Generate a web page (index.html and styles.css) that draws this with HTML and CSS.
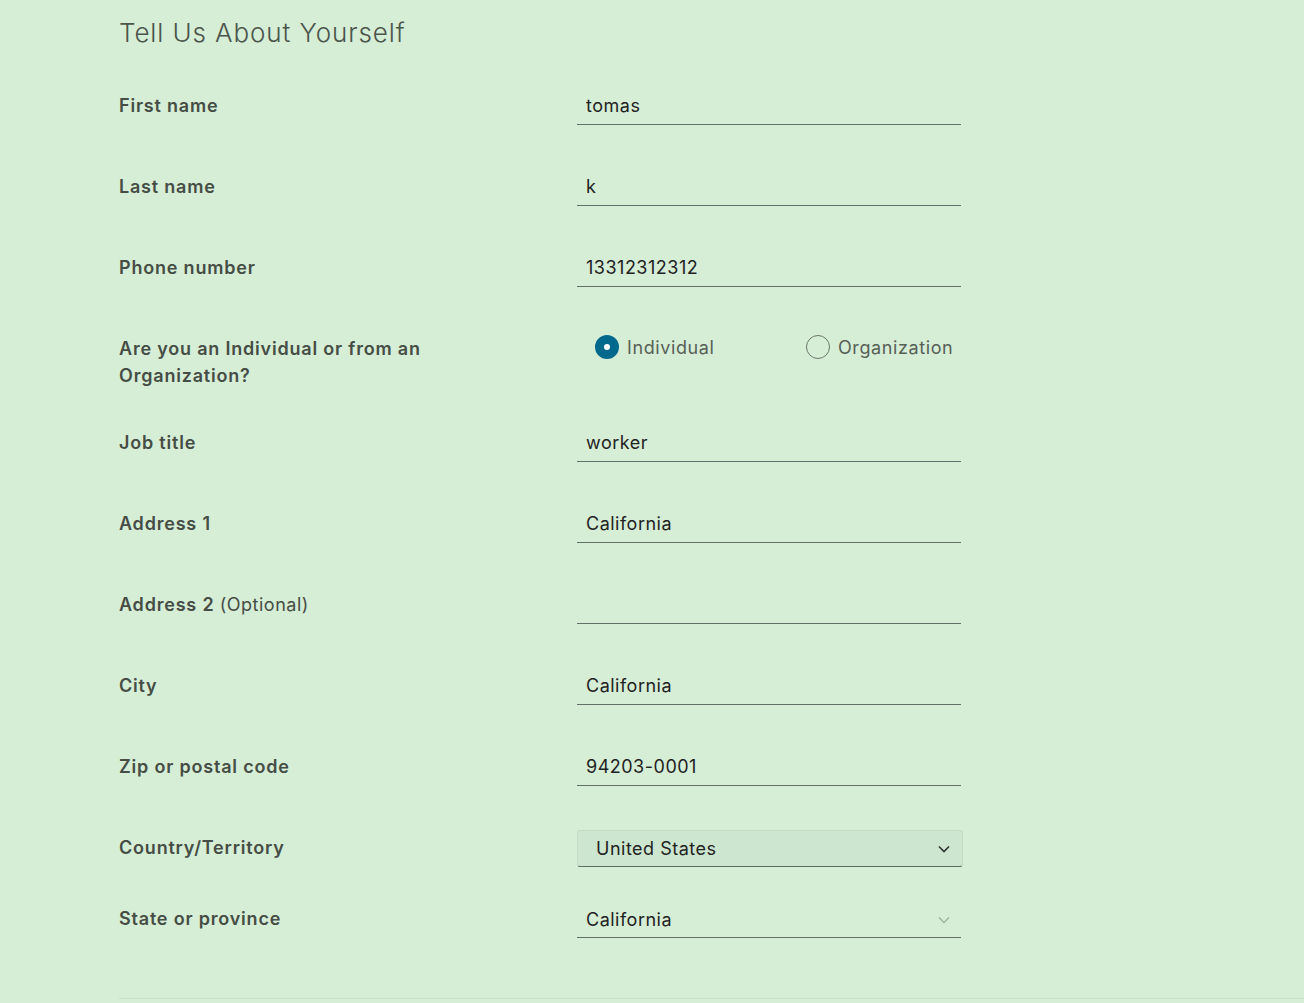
FILE: index.html
```html
<!DOCTYPE html>
<html>
<head>
<meta charset="utf-8">
<link rel="stylesheet" href="styles.css">
</head>
<body>
<div class="page">
  <h1 class="title">Tell Us About Yourself</h1>
  <form class="form">
    <div class="row">
      <label class="label">First name</label>
      <div class="field"><input class="input" value="tomas"></div>
    </div>
    <div class="row">
      <label class="label">Last name</label>
      <div class="field"><input class="input" value="k"></div>
    </div>
    <div class="row">
      <label class="label">Phone number</label>
      <div class="field"><input class="input" value="13312312312"></div>
    </div>
    <div class="row row-radio">
      <label class="label">Are you an Individual or from an Organization?</label>
      <div class="radios">
        <span class="radio radio-first"><span class="dot checked"></span><span class="radio-text">Individual</span></span>
        <span class="radio"><span class="dot"></span><span class="radio-text">Organization</span></span>
      </div>
    </div>
    <div class="row">
      <label class="label">Job title</label>
      <div class="field"><input class="input" value="worker"></div>
    </div>
    <div class="row">
      <label class="label">Address 1</label>
      <div class="field"><input class="input" value="California"></div>
    </div>
    <div class="row">
      <label class="label">Address 2 <span class="opt">(Optional)</span></label>
      <div class="field"><input class="input" value=""></div>
    </div>
    <div class="row">
      <label class="label">City</label>
      <div class="field"><input class="input" value="California"></div>
    </div>
    <div class="row">
      <label class="label">Zip or postal code</label>
      <div class="field"><input class="input" value="94203-0001"></div>
    </div>
    <div class="row row-country">
      <label class="label">Country/Territory</label>
      <div class="select-box">
        <span class="select-text">United States</span>
        <svg class="chev" width="12" height="8" viewBox="0 0 12 8"><path d="M1 1.5 L6 6.5 L11 1.5" fill="none" stroke="#2f3530" stroke-width="1.6"/></svg>
      </div>
    </div>
    <div class="row row-last">
      <label class="label">State or province</label>
      <div class="field select-line">
        <span class="select-text">California</span>
        <svg class="chev" width="12" height="8" viewBox="0 0 12 8"><path d="M1 1.5 L6 6.5 L11 1.5" fill="none" stroke="#9fb09f" stroke-width="1.3"/></svg>
      </div>
    </div>
  </form>
  <div class="divider"></div>
</div>
</body>
</html>
```

FILE: styles.css
```css
html, body {
  margin: 0;
  padding: 0;
  background: #d6edd6;
}
body {
  font-family: "Inter", "Liberation Sans", sans-serif;
  color: #474f47;
}
.page {
  padding-left: 119px;
  height: 1003px;
  overflow: hidden;
}
.title {
  margin: 0;
  padding-top: 17px;
  height: 89px;
  box-sizing: border-box;
  font-size: 26px;
  line-height: 32px;
  font-weight: 300;
  letter-spacing: 0.9px;
  color: #4b554b;
}
.form {
  display: flex;
  flex-direction: column;
}
.row {
  display: grid;
  grid-template-columns: 458px 384px;
  padding-bottom: 45px;
}
.label {
  padding-top: 2.5px;
  font-size: 18px;
  line-height: 27px;
  font-weight: 600;
  letter-spacing: 0.8px;
  color: #454d45;
  max-width: 330px;
}
.opt {
  font-weight: 400;
  letter-spacing: 0.5px;
}
.field {
  height: 36px;
  box-sizing: border-box;
  border-bottom: 1px solid #62706a;
}
.input {
  display: block;
  width: 100%;
  box-sizing: border-box;
  border: 0;
  outline: 0;
  background: transparent;
  font-family: inherit;
  font-size: 18px;
  letter-spacing: 0.5px;
  line-height: 24px;
  height: 35px;
  padding: 4px 9px 7px;
  color: #1f231f;
}
.row-radio {
  height: 94px;
  padding-bottom: 0;
  box-sizing: border-box;
}
.radios {
  display: flex;
  padding-left: 18px;
  padding-top: 3px;
  height: 24px;
}
.radio {
  display: flex;
  align-items: center;
  gap: 8px;
  font-size: 18px;
  letter-spacing: 0.6px;
  color: #566156;
}
.radio-first {
  width: 211px;
}
.dot {
  width: 24px;
  height: 24px;
  flex: none;
  box-sizing: border-box;
  border-radius: 50%;
  border: 1px solid #6b776b;
  display: inline-block;
}
.dot.checked {
  border: 9px solid #00698c;
  background: #fff;
}
.row-country {
  padding-bottom: 35px;
}
.select-box {
  width: 386px;
  height: 37px;
  box-sizing: border-box;
  margin-top: -1px;
  background: #cde6cf;
  border: 1px solid #c2dbc4;
  border-bottom: 1px solid #5e6c63;
  border-radius: 3px;
  display: flex;
  align-items: center;
  padding: 0 12px 0 18px;
  justify-content: space-between;
}
.select-text {
  font-size: 18px;
  letter-spacing: 0.5px;
  color: #1f231f;
}
.select-line {
  display: flex;
  align-items: center;
  justify-content: space-between;
  padding: 0 11px 0 9px;
}
.chev {
  display: block;
}
.divider {
  height: 1px;
  background: #c8e0c9;
  margin-top: 15px;
}
```
